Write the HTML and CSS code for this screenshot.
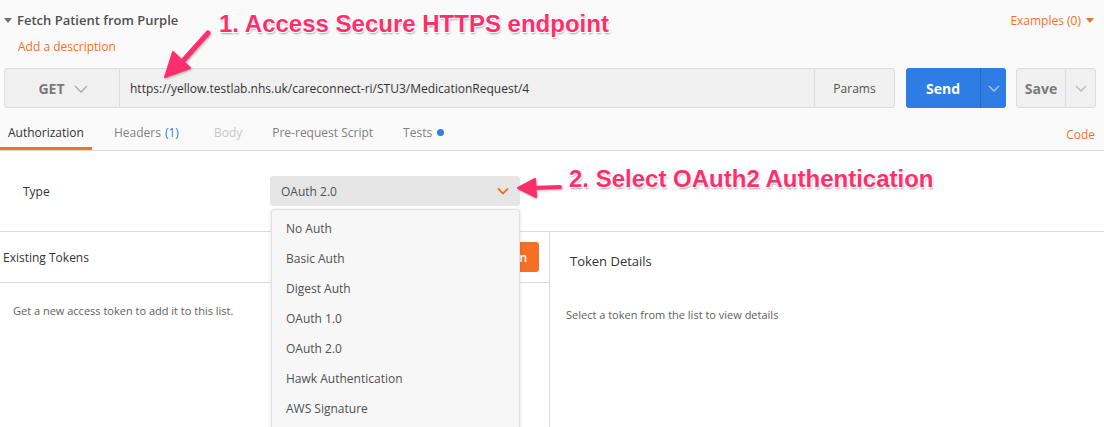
FILE: index.html
```html
<!DOCTYPE html>
<html>
<head>
<meta charset="utf-8">
<link rel="stylesheet" href="styles.css">
</head>
<body>
<div class="app">
  <div class="top">
    <div class="title-row">
      <div class="title"><span class="caret"></span>Fetch Patient from Purple</div>
      <div class="examples">Examples (0) <span class="caret-o"></span></div>
    </div>
    <div class="desc">Add a description</div>
    <div class="req-row">
      <div class="req-box">
        <div class="method">GET <svg class="chev" width="14" height="8" viewBox="0 0 14 8"><path d="M1 1 L7 7 L13 1" fill="none" stroke="#b0b0b0" stroke-width="1.5"/></svg></div>
        <div class="url">https://yellow.testlab.nhs.uk/careconnect-ri/STU3/MedicationRequest/4</div>
        <div class="params">Params</div>
      </div>
      <div class="send">
        <div class="send-main">Send</div>
        <div class="send-arrow"><svg width="12" height="7" viewBox="0 0 12 7"><path d="M1 1 L6 6 L11 1" fill="none" stroke="#a9c8f3" stroke-width="1.3"/></svg></div>
      </div>
      <div class="save">
        <div class="save-main">Save</div>
        <div class="save-arrow"><svg width="12" height="7" viewBox="0 0 12 7"><path d="M1 1 L6 6 L11 1" fill="none" stroke="#b8b8b8" stroke-width="1.3"/></svg></div>
      </div>
    </div>
    <div class="tabs">
      <div class="tab-list">
        <div class="tab active">Authorization</div>
        <div class="tab wide">Headers <span class="blue">(1)</span></div>
        <div class="tab dim">Body</div>
        <div class="tab">Pre-request Script</div>
        <div class="tab">Tests <span class="dot"></span></div>
      </div>
      <div class="code">Code</div>
    </div>
  </div>
  <div class="content">
    <div class="type-row">
      <div class="type-label">Type</div>
      <div class="select">OAuth 2.0 <svg width="12" height="8" viewBox="0 0 12 8"><path d="M1 1.5 L6 6.5 L11 1.5" fill="none" stroke="#f47023" stroke-width="1.8"/></svg></div>
    </div>
    <div class="tokens">
      <div class="tok-left">
        <div class="tok-head">
          <span>Existing Tokens</span>
          <span class="get-btn">Get New Access Token</span>
        </div>
        <div class="tok-empty">Get a new access token to add it to this list.</div>
      </div>
      <div class="tok-right">
        <div class="details-head">Token Details</div>
        <div class="details-empty">Select a token from the list to view details</div>
      </div>
    </div>
  </div>

  <ul class="menu">
    <li>No Auth</li>
    <li>Basic Auth</li>
    <li>Digest Auth</li>
    <li>OAuth 1.0</li>
    <li>OAuth 2.0</li>
    <li>Hawk Authentication</li>
    <li>AWS Signature</li>
  </ul>

  <div class="note note1">1. Access Secure HTTPS endpoint</div>
  <div class="note note2">2. Select OAuth2 Authentication</div>

  <svg class="arrow arrow1" width="60" height="60" viewBox="0 0 60 60">
    <path d="M48 9 L22 38" stroke="#fe2f6c" stroke-width="5" stroke-linecap="round" fill="none"/>
    <path d="M5 53 L13 28 L30 44 Z" fill="#fe2f6c" stroke="#fe2f6c" stroke-width="2" stroke-linejoin="round"/>
  </svg>
  <svg class="arrow arrow2" width="50" height="26" viewBox="0 0 50 26">
    <path d="M45 13 L18 14" stroke="#fe2f6c" stroke-width="4" stroke-linecap="round" fill="none"/>
    <path d="M3 14 L20 5 L21 23 Z" fill="#fe2f6c" stroke="#fe2f6c" stroke-width="2" stroke-linejoin="round"/>
  </svg>
</div>
</body>
</html>
```

FILE: styles.css
```css
* { box-sizing: border-box; }
html, body { margin: 0; padding: 0; }
body {
  font-family: "Open Sans", "Noto Sans", sans-serif;
  color: #505050;
  background: #fff;
  width: 1104px;
  height: 427px;
  overflow: hidden;
}
.app { position: relative; width: 1104px; height: 427px; overflow: hidden; }
.top { background: #fafafa; }
.title-row {
  display: flex;
  justify-content: space-between;
  align-items: center;
  height: 40px;
  padding: 0 10px 0 4px;
}
.title { font-size: 13px; font-weight: 600; color: #505050; display: flex; align-items: center; }
.caret {
  width: 0; height: 0;
  border-left: 4px solid transparent;
  border-right: 4px solid transparent;
  border-top: 5px solid #707070;
  margin-right: 5px;
}
.examples { font-size: 12px; color: #f47023; display: flex; align-items: center; }
.caret-o {
  width: 0; height: 0;
  border-left: 4px solid transparent;
  border-right: 4px solid transparent;
  border-top: 5px solid #f47023;
  margin-left: 5px;
}
.desc { font-size: 12px; color: #f47023; padding-left: 18px; height: 14px; line-height: 14px; margin-top: 0; }
.req-row {
  display: flex;
  align-items: stretch;
  height: 40px;
  margin-top: 14px;
  padding-left: 4px;
}
.req-box {
  display: flex;
  width: 891px;
  border: 1px solid #dcdcdc;
  border-radius: 3px;
  background: #f0f0f0;
}
.method {
  width: 115px;
  display: flex;
  align-items: center;
  justify-content: center;
  gap: 9px;
  font-size: 14px;
  font-weight: 700;
  color: #7a7a7a;
  border-right: 1px solid #dcdcdc;
  padding-left: 2px;
}
.method .chev { margin-top: 1px; }
.url {
  flex: 1;
  display: flex;
  align-items: center;
  padding-left: 10px;
  font-size: 12px;
  color: #333;
}
.params {
  width: 80px;
  display: flex;
  align-items: center;
  justify-content: center;
  font-size: 12px;
  color: #505050;
  border-left: 1px solid #dcdcdc;
}
.send {
  display: flex;
  margin-left: 11px;
  width: 100px;
  background: #2e7de4;
  border-radius: 3px;
}
.send-main {
  width: 75px;
  display: flex;
  align-items: center;
  justify-content: center;
  color: #fff;
  font-weight: 700;
  font-size: 14px;
  border-right: 1px solid #2567c0;
}
.send-arrow { flex: 1; display: flex; align-items: center; justify-content: center; }
.save {
  display: flex;
  margin-left: 10px;
  width: 80px;
  background: #f0f0f0;
  border: 1px solid #dcdcdc;
  border-radius: 3px;
}
.save-main {
  width: 49px;
  display: flex;
  align-items: center;
  justify-content: center;
  color: #7a7a7a;
  font-weight: 700;
  font-size: 14px;
  border-right: 1px solid #dcdcdc;
}
.save-arrow { flex: 1; display: flex; align-items: center; justify-content: center; }
.tabs {
  display: flex;
  justify-content: space-between;
  align-items: stretch;
  height: 43px;
  margin-top: 0;
  border-bottom: 1px solid #dadada;
}
.tab-list { display: flex; }
.tab {
  display: flex;
  align-items: center;
  font-size: 12px;
  color: #808080;
  padding: 9px 0 0 0;
  margin-right: 30px;
  border-bottom: 3px solid transparent;
}
.tab.active {
  color: #333;
  border-bottom-color: #f47023;
  width: 92px;
  padding: 9px 0 0 8px;
  margin-right: 22px;
}
.tab.wide { margin-right: 35px; }
.tab.dim { color: #c8c8c8; }
.blue { color: #2e7de4; margin-left: 4px; }
.dot {
  display: inline-block;
  width: 7px; height: 7px;
  border-radius: 50%;
  background: #2e7de4;
  margin-left: 5px;
}
.code {
  display: flex;
  align-items: center;
  padding: 10px 9px 0 0;
  font-size: 12px;
  color: #f47023;
}
.content { background: #fff; }
.type-row {
  display: flex;
  align-items: center;
  height: 81px;
  border-bottom: 1px solid #dadada;
}
.type-label { width: 270px; padding-left: 23px; font-size: 12px; color: #333; }
.select {
  width: 250px;
  height: 30px;
  background: #e6e6e6;
  border-radius: 3px;
  display: flex;
  align-items: center;
  justify-content: space-between;
  padding: 0 11px 0 11px;
  font-size: 12px;
  color: #505050;
}
.tokens { display: flex; height: 200px; }
.tok-left { width: 550px; border-right: 1px solid #dadada; }
.tok-head {
  height: 51px;
  border-bottom: 1px solid #dadada;
  display: flex;
  align-items: center;
  justify-content: space-between;
  padding: 0 10px 0 3px;
  font-size: 12px;
  color: #333;
}
.get-btn {
  background: #f47023;
  color: #fff;
  font-size: 12px;
  font-weight: 600;
  height: 30px;
  border-radius: 3px;
  display: flex;
  align-items: center;
  padding: 0 12px;
}
.tok-empty { padding: 20px 0 0 13px; font-size: 11px; color: #606060; }
.tok-right { flex: 1; }
.details-head { padding: 20px 0 0 20px; font-size: 13px; color: #333; height: 60px; }
.details-empty { padding: 15px 0 0 16px; font-size: 11px; color: #606060; }
.menu {
  position: absolute;
  left: 271px;
  top: 209px;
  width: 249px;
  height: 240px;
  margin: 0;
  padding: 3px 0 0 0;
  list-style: none;
  background: #f7f7f7;
  border: 1px solid #e0e0e0;
  border-radius: 3px;
  box-shadow: 0 1px 4px rgba(0,0,0,0.12);
}
.menu li {
  height: 30px;
  display: flex;
  align-items: center;
  padding-left: 14px;
  font-size: 12px;
  color: #505050;
}
.note {
  position: absolute;
  font-family: "Liberation Sans", Arial, sans-serif;
  font-weight: 700;
  color: #fe2f6c;
  white-space: nowrap;
  font-size: 24px;
  text-shadow: -1px -1px 0 #fff, 1px -1px 0 #fff, -1px 1px 0 #fff, 1px 1px 0 #fff, 1px 2px 2px rgba(0,0,0,0.35);
}
.note1 { left: 219px; top: 10px; }
.note2 { left: 569px; top: 165px; }
.arrow { position: absolute; filter: drop-shadow(1px 1px 1px rgba(0,0,0,0.3)); }
.arrow1 { left: 160px; top: 24px; }
.arrow2 { left: 515px; top: 174px; }
```
